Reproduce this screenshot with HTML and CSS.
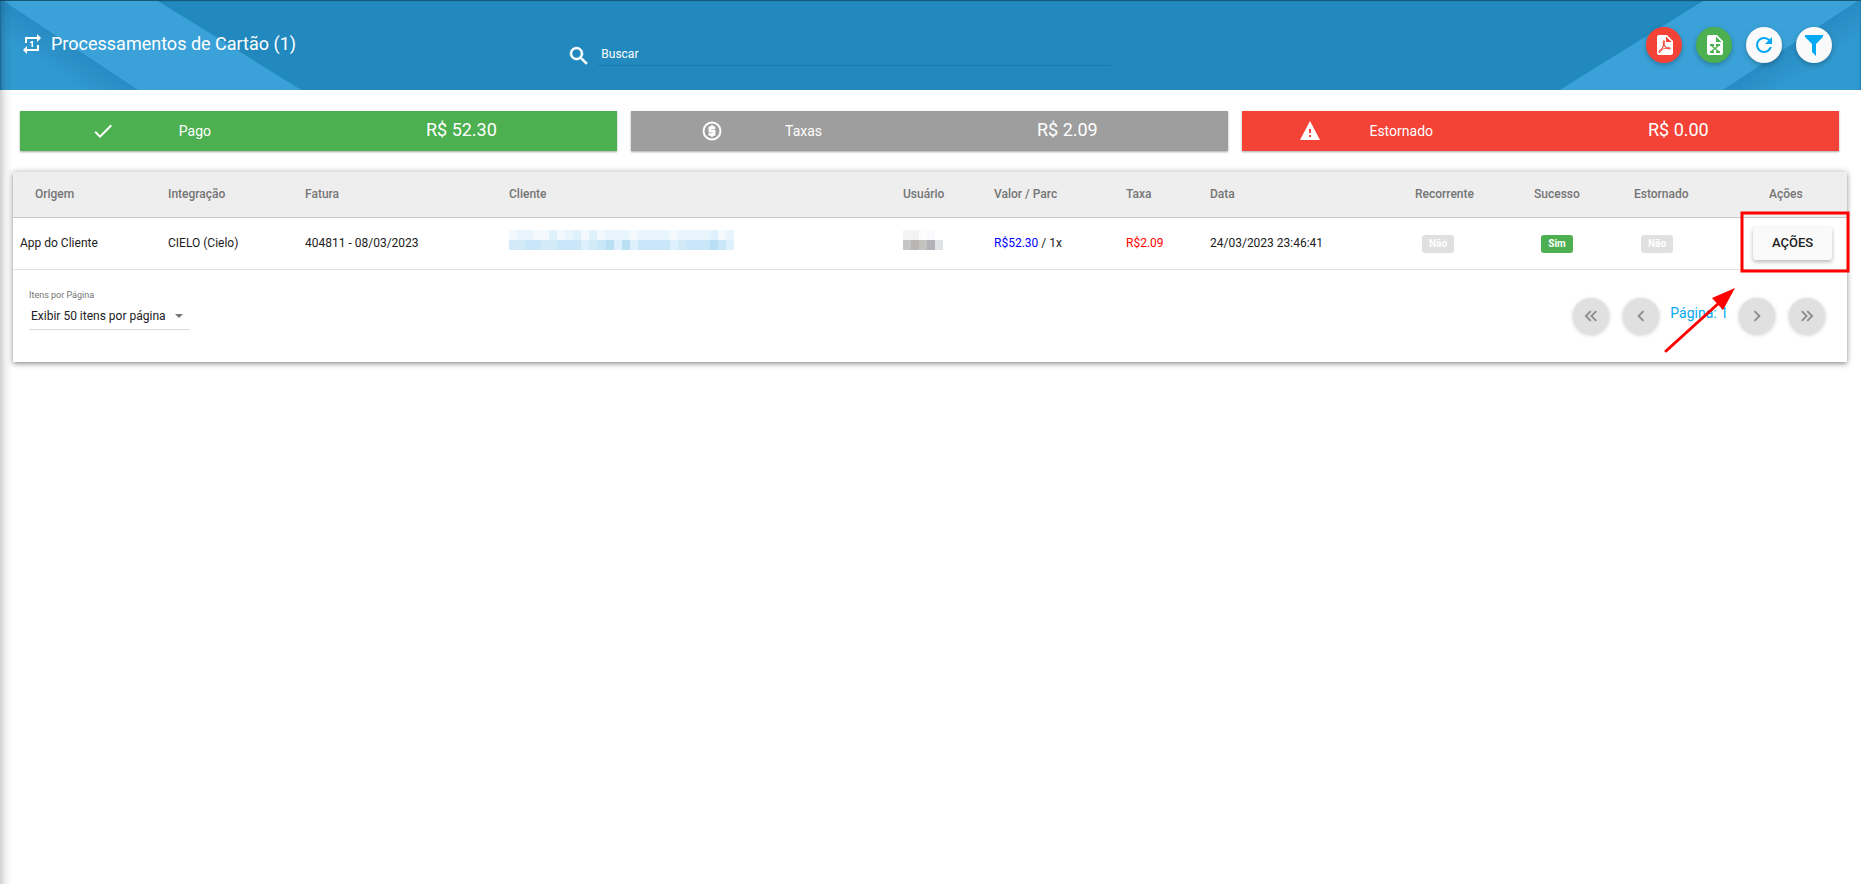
FILE: index.html
```html
<!DOCTYPE html>
<html lang="pt-BR">
<head>
<meta charset="utf-8">
<title>Processamentos de Cartão</title>
<link rel="stylesheet" href="styles.css">
</head>
<body>
<svg class="defs" width="0" height="0" aria-hidden="true">
  <defs>
    <linearGradient id="fold" gradientUnits="userSpaceOnUse" x1="69" y1="45" x2="52" y2="71">
      <stop offset="0" stop-color="#278cc3"/><stop offset="1" stop-color="#3099cf"/>
    </linearGradient>
    <symbol id="ribbon" viewBox="0 0 304 90">
      <polygon points="0,0 158,0 303,90 0,90" fill="#3aa2d8"/>
      <polygon points="0,0 2,0 138,90 0,90" fill="url(#fold)"/>
    </symbol>
  </defs>
</svg>

<header class="toolbar">
  <svg class="ribbon" width="304" height="90" aria-hidden="true"><use href="#ribbon"/></svg>
  <svg class="ribbon ribbon-right" width="304" height="90" aria-hidden="true"><use href="#ribbon"/></svg>
  <h1 class="title">
    <svg class="icon" viewBox="0 0 24 24"><path d="M13,15V9H12L10,10V11H11.5V15M17,17H7V14L3,18L7,22V19H19V13H17M7,7H17V10L21,6L17,2V5H5V11H7V7Z"/></svg>
    Processamentos de Cartão (1)
  </h1>
  <div class="search">
    <svg class="icon" viewBox="0 0 24 24"><path d="M9.5,3A6.5,6.5 0 0,1 16,9.5C16,11.11 15.41,12.59 14.44,13.73L14.71,14H15.5L20.5,19L19,20.5L14,15.5V14.71L13.73,14.44C12.59,15.41 11.11,16 9.5,16A6.5,6.5 0 0,1 3,9.5A6.5,6.5 0 0,1 9.5,3M9.5,5C7,5 5,7 5,9.5C5,12 7,14 9.5,14C12,14 14,12 14,9.5C14,7 12,5 9.5,5Z" stroke="currentColor" stroke-width="0.5"/></svg>
    <input class="search-input" type="text" placeholder="Buscar" aria-label="Buscar">
  </div>
  <div class="tools">
    <button class="fab fab-red" type="button" aria-label="Exportar PDF"><svg class="icon" viewBox="0 0 24 24"><path d="M14,9H19.5L14,3.5V9M7,2H15L21,8V20A2,2 0 0,1 19,22H7C5.89,22 5,21.1 5,20V4A2,2 0 0,1 7,2M11.93,12.44C12.34,13.34 12.86,14.08 13.46,14.59L13.87,14.91C13,15.07 11.8,15.35 10.53,15.84V15.84L10.42,15.88L10.92,14.84C11.37,13.97 11.7,13.18 11.93,12.44M18.41,16.25C18.59,16.07 18.68,15.84 18.69,15.59C18.72,15.39 18.67,15.2 18.57,15.04C18.28,14.57 17.53,14.35 16.29,14.35L15,14.42L14.13,13.84C13.5,13.32 12.93,12.41 12.53,11.28L12.57,11.14C12.9,9.81 13.21,8.2 12.55,7.54C12.39,7.38 12.17,7.3 11.94,7.3H11.7C11.33,7.3 11,7.69 10.91,8.07C10.54,9.4 10.76,10.13 11.13,11.34V11.35C10.88,12.23 10.56,13.25 10.05,14.28L9.09,16.08L8.2,16.57C7,17.32 6.43,18.16 6.32,18.69C6.28,18.88 6.3,19.05 6.37,19.23L6.4,19.28L6.88,19.59L7.32,19.7C8.13,19.7 9.05,18.75 10.29,16.63L10.47,16.56C11.5,16.23 12.78,16 14.5,15.81C15.53,16.32 16.74,16.55 17.5,16.55C17.94,16.55 18.24,16.44 18.41,16.25M18,15.54L18.09,15.65C18.08,15.75 18.05,15.76 18,15.78H17.96L17.77,15.8C17.31,15.8 16.6,15.61 15.87,15.29C15.96,15.19 16,15.19 16.1,15.19C17.5,15.19 17.9,15.44 18,15.54M8.83,17C8.18,18.19 7.59,18.85 7.14,19C7.19,18.62 7.64,17.96 8.35,17.31L8.83,17M11.85,10.09C11.62,9.19 11.61,8.46 11.78,8.04L11.85,7.92L12,7.97C12.17,8.21 12.19,8.53 12.09,9.07L12.06,9.23L11.9,10.05L11.85,10.09Z"/></svg></button>
    <button class="fab fab-green" type="button" aria-label="Exportar Excel"><svg class="icon" viewBox="0 0 24 24"><path d="M14,9H19.5L14,3.5V9M7,2H15L21,8V20A2,2 0 0,1 19,22H7C5.89,22 5,21.1 5,20V4C5,2.89 5.89,2 7,2M18,11H14V13H15L13,14.67L11,13H12V11H8V13H9L12,15.5L9,18H8V20H12V18H11L13,16.33L15,18H14V20H18V18H17L14,15.5L17,13H18V11Z"/></svg></button>
    <button class="fab fab-white" type="button" aria-label="Atualizar"><svg class="icon" viewBox="0 0 24 24"><path d="M17.65,6.35C16.2,4.9 14.21,4 12,4A8,8 0 0,0 4,12A8,8 0 0,0 12,20C15.73,20 18.84,17.45 19.73,14H17.65C16.83,16.33 14.61,18 12,18A6,6 0 0,1 6,12A6,6 0 0,1 12,6C13.66,6 15.14,6.69 16.22,7.78L13,11H20V4L17.65,6.35Z"/></svg></button>
    <button class="fab fab-white" type="button" aria-label="Filtrar"><svg class="icon" viewBox="0 0 24 24"><path d="M3,2H21V4H20.92L14,10.92V22.91L10,18.91V10.91L3.09,4H3V2Z"/></svg></button>
  </div>
</header>

<main class="content">
  <section class="summary">
    <div class="stat stat-green">
      <div class="stat-name">
        <span class="stat-icon"><svg class="icon" viewBox="0 0 24 24"><path d="M21,7L9,19L3.5,13.5L4.91,12.09L9,16.17L19.59,5.59L21,7Z"/></svg></span>
        <span>Pago</span>
      </div>
      <strong class="stat-value">R$ 52.30</strong>
    </div>
    <div class="stat stat-gray">
      <div class="stat-name">
        <span class="stat-icon"><svg class="icon" viewBox="0 0 24 24"><circle cx="12" cy="12" r="8.5" fill="none" stroke="currentColor" stroke-width="2"/><path d="M11,17.5H13V16.5H14A1,1 0 0,0 15.2,15.3V12.2A1,1 0 0,0 14,11H11V10H15V7.7H13V6.5H11V7.7H10A1,1 0 0,0 8.8,8.9V12A1,1 0 0,0 10,13.2H13V14.2H8.8V16.5H11V17.5Z" stroke="currentColor" stroke-width="0.5"/></svg></span>
        <span>Taxas</span>
      </div>
      <strong class="stat-value">R$ 2.09</strong>
    </div>
    <div class="stat stat-red">
      <div class="stat-name">
        <span class="stat-icon"><svg class="icon" viewBox="0 0 24 24"><path d="M13,14H11V10H13M13,18H11V16H13M2,21H22L12,2L2,21Z"/></svg></span>
        <span>Estornado</span>
      </div>
      <strong class="stat-value">R$ 0.00</strong>
    </div>
  </section>

  <section class="card">
    <table class="grid">
      <colgroup>
        <col class="c-origem"><col class="c-integracao"><col class="c-fatura"><col><col class="c-usuario"><col class="c-valor"><col class="c-taxa"><col class="c-data"><col class="c-recorrente"><col class="c-sucesso"><col class="c-estornado"><col class="c-acoes">
      </colgroup>
      <thead>
        <tr><th class="first">Origem</th><th>Integração</th><th>Fatura</th><th>Cliente</th><th>Usuário</th><th>Valor / Parc</th><th>Taxa</th><th>Data</th><th>Recorrente</th><th>Sucesso</th><th>Estornado</th><th class="acoes">Ações</th></tr>
      </thead>
      <tbody>
        <tr>
          <td class="first">App do Cliente</td>
          <td>CIELO (Cielo)</td>
          <td>404811 - 08/03/2023</td>
          <td>
            <svg class="mosaic" width="225" height="20" shape-rendering="crispEdges" aria-label="Cliente oculto">
              <rect width="225" height="10" fill="#e8f5fd"/>
              <g fill="#f3f9fd"><rect width="8" height="10"/><rect x="24" width="16" height="10"/><rect x="48" width="8" height="10"/><rect x="72" width="8" height="10"/><rect x="88" width="8" height="10"/><rect x="121" width="8" height="10"/><rect x="161" width="8" height="10"/><rect x="209" width="8" height="10"/></g>
              <g fill="#def1fc"><rect x="40" width="8" height="10"/><rect x="64" width="8" height="10"/><rect x="80" width="8" height="10"/><rect x="201" width="8" height="10"/></g>
              <rect y="10" width="225" height="10" fill="#c9e7f8"/>
              <g fill="#d3eaf8"><rect y="10" width="16" height="10"/><rect x="32" y="10" width="16" height="10"/><rect x="80" y="10" width="8" height="10"/><rect x="169" y="10" width="8" height="10"/></g>
              <g fill="#ddf0fb"><rect x="72" y="10" width="8" height="10"/><rect x="105" y="10" width="8" height="10"/><rect x="121" y="10" width="8" height="10"/><rect x="161" y="10" width="8" height="10"/><rect x="217" y="10" width="8" height="10"/></g>
              <g fill="#bae0f6"><rect x="97" y="10" width="8" height="10"/><rect x="113" y="10" width="8" height="10"/><rect x="201" y="10" width="8" height="10"/></g>
            </svg>
          </td>
          <td>
            <svg class="mosaic" width="40" height="20" shape-rendering="crispEdges" aria-label="Usuário oculto">
              <rect width="16" height="10" fill="#f4f3f3"/><rect x="16" width="8" height="10" fill="#fdfdfb"/><rect x="24" width="8" height="10" fill="#fafafd"/>
              <rect y="10" width="8" height="10" fill="#c6c6c6"/><rect x="8" y="10" width="8" height="10" fill="#bab5b3"/><rect x="16" y="10" width="8" height="10" fill="#c3c4bf"/><rect x="24" y="10" width="8" height="10" fill="#b3b2b9"/><rect x="32" y="10" width="8" height="10" fill="#dfe3e4"/>
            </svg>
          </td>
          <td><span class="amount">R$52.30</span> / 1x</td>
          <td class="fee">R$2.09</td>
          <td>24/03/2023 23:46:41</td>
          <td><span class="badge">Não</span></td>
          <td><span class="badge badge-yes">Sim</span></td>
          <td><span class="badge">Não</span></td>
          <td>
            <div class="actions-wrap">
              <button class="action-button" type="button">AÇÕES</button>
              <svg class="marker" width="186" height="144" viewBox="0 0 186 144" aria-hidden="true">
                <rect x="78" y="2" width="106" height="58" fill="none" stroke="#f00" stroke-width="3"/>
                <line x1="2" y1="140" x2="56" y2="91" stroke="#f00" stroke-width="3" stroke-linecap="round"/>
                <polygon points="71,77 48,87 59,99" fill="#f00"/>
              </svg>
            </div>
          </td>
        </tr>
      </tbody>
    </table>

    <footer class="pager">
      <div class="page-size">
        <label class="page-size-label" for="page-size">Itens por Página</label>
        <div class="select-box">
          <select class="page-size-select" id="page-size"><option>Exibir 50 itens por página</option></select>
          <span class="caret"></span>
        </div>
      </div>
      <nav class="pages" aria-label="Paginação">
        <button class="fab fab-off" type="button" disabled aria-label="Primeira"><svg class="chevron" viewBox="0 0 24 24"><path d="M18.41,7.41L17,6L11,12L17,18L18.41,16.59L13.83,12L18.41,7.41M12.41,7.41L11,6L5,12L11,18L12.41,16.59L7.83,12L12.41,7.41Z"/></svg></button>
        <button class="fab fab-off" type="button" disabled aria-label="Anterior"><svg class="chevron" viewBox="0 0 24 24"><path d="M15.41,16.58L10.83,12L15.41,7.41L14,6L8,12L14,18L15.41,16.58Z"/></svg></button>
        <span class="page-now">Página: 1</span>
        <button class="fab fab-off" type="button" disabled aria-label="Próxima"><svg class="chevron" viewBox="0 0 24 24"><path d="M8.59,16.58L13.17,12L8.59,7.41L10,6L16,12L10,18L8.59,16.58Z"/></svg></button>
        <button class="fab fab-off" type="button" disabled aria-label="Última"><svg class="chevron" viewBox="0 0 24 24"><path d="M5.59,7.41L7,6L13,12L7,18L5.59,16.59L10.17,12L5.59,7.41M11.59,7.41L13,6L19,12L13,18L11.59,16.59L16.17,12L11.59,7.41Z"/></svg></button>
      </nav>
    </footer>
  </section>
</main>
<div class="edge-shadow"></div>
</body>
</html>
```

FILE: styles.css
```css
* {
  box-sizing: border-box;
}

body {
  margin: 0;
  min-height: 100vh;
  background: #fff;
  color: #212121;
  font-family: Roboto, "Liberation Sans", sans-serif;
  font-size: 12px;
  line-height: 16px;
}

button,
input,
select {
  font: inherit;
}

svg {
  display: block;
  flex: none;
}

path {
  fill: currentColor;
}

.defs {
  position: absolute;
}

.icon {
  width: 24px;
  height: 24px;
}

.edge-shadow {
  position: fixed;
  top: 0;
  bottom: 0;
  left: 0;
  width: 12px;
  background: linear-gradient(to right, rgba(0, 0, 0, 0.18), rgba(0, 0, 0, 0.06) 45%, transparent);
  pointer-events: none;
}

/* Toolbar */
.toolbar {
  position: relative;
  display: grid;
  grid-template-columns: 300fr 297fr 403fr;
  height: 90px;
  color: #fff;
  background: #2189be;
  box-shadow: inset 0 1px 1px rgba(0, 0, 0, 0.4);
}

.ribbon {
  position: absolute;
  top: 1px;
  left: 0;
  height: 89px;
}

.ribbon-right {
  left: auto;
  right: 0;
  transform: scaleX(-1);
}

.title {
  position: relative;
  display: flex;
  align-items: center;
  gap: 7px;
  height: 88px;
  margin: 0;
  padding-left: 20px;
  font-size: 18px;
  font-weight: 400;
  white-space: nowrap;
}

.search {
  display: flex;
  align-items: flex-end;
  align-self: start;
  gap: 7px;
  padding: 42px 0 0 9px;
}

.search-input {
  flex: 1;
  height: 24px;
  padding: 0 3px;
  border: 0;
  border-bottom: 1px solid #1b78b0;
  outline: 0;
  background: transparent;
  color: #fff;
}

.search .icon {
  margin: 2px 0 -2px;
}

.search-input::placeholder {
  color: #fff;
  opacity: 1;
}

.tools {
  position: relative;
  display: flex;
  align-items: center;
  justify-content: flex-end;
  gap: 14px;
  padding-right: 29px;
}

.fab {
  display: flex;
  align-items: center;
  justify-content: center;
  width: 36px;
  height: 36px;
  padding: 0;
  border: 0;
  border-radius: 50%;
  box-shadow: 0 2px 5px rgba(0, 0, 0, 0.26);
}

.fab-red {
  background: #f44336;
  color: #fff;
}

.fab-green {
  background: #4caf50;
  color: #fff;
}

.fab-white {
  background: #fafafa;
  color: #03a9f4;
}

/* Summary cards */
.summary {
  display: grid;
  grid-template-columns: repeat(3, 1fr);
  gap: 14px;
  padding: 21px 22px 21px 20px;
}

.stat {
  display: grid;
  grid-template-columns: 32% 32%;
  justify-content: space-between;
  align-items: center;
  height: 40px;
  color: #fff;
  box-shadow: 0 1px 2px rgba(0, 0, 0, 0.35);
}

.stat-green {
  background: #4caf50;
}

.stat-gray {
  background: #9e9e9e;
}

.stat-red {
  background: #f44336;
}

.stat-name {
  display: flex;
  align-items: center;
  font-size: 14px;
}

.stat-icon {
  display: flex;
  flex: 1;
  justify-content: center;
  padding-left: 8px;
}

.stat-value {
  padding-bottom: 2px;
  font-size: 18px;
  font-weight: 400;
}

/* Table card */
.card {
  margin: 0 14px 0 13px;
  background: #fff;
  box-shadow: 0 2px 5px rgba(0, 0, 0, 0.4), 0 -2px 6px rgba(0, 0, 0, 0.1);
}

.grid {
  width: 100%;
  table-layout: fixed;
  border-collapse: collapse;
  text-align: left;
}

.c-origem { width: 155px; }
.c-integracao { width: 137px; }
.c-fatura { width: 204px; }
.c-usuario { width: 91px; }
.c-valor { width: 132px; }
.c-taxa { width: 84px; }
.c-data { width: 205px; }
.c-recorrente { width: 119px; }
.c-sucesso { width: 100px; }
.c-estornado { width: 119px; }
.c-acoes { width: 94px; }

.grid th,
.grid td {
  padding: 0;
  white-space: nowrap;
}

.grid th {
  height: 45px;
  border-bottom: 1px solid #c9c9c9;
  background: #eee;
  color: #757575;
  font-weight: 500;
}

.grid td {
  height: 52px;
  border-bottom: 1px solid #e0e0e0;
}

.grid th.first {
  padding-left: 22px;
}

.grid td.first {
  padding-left: 7px;
}

.grid th.acoes {
  padding-left: 16px;
}

.mosaic {
  margin-bottom: 6px;
}

.amount {
  color: #00f;
}

.grid td.fee {
  color: #f00;
}

.badge {
  display: block;
  width: 32px;
  height: 18px;
  margin: 2px 0 0 7px;
  border-radius: 3px;
  background: #e0e0e0;
  color: #fff;
  font-size: 10px;
  font-weight: 700;
  line-height: 18px;
  text-align: center;
}

.badge-yes {
  background: #4caf50;
}

.actions-wrap {
  position: relative;
  width: 79px;
}

.action-button {
  width: 79px;
  height: 33px;
  padding: 0;
  border: 0;
  border-radius: 3px;
  background: #fafafa;
  color: #212121;
  font-size: 13px;
  font-weight: 500;
  box-shadow: 0 2px 4px rgba(0, 0, 0, 0.28);
}

.marker {
  position: absolute;
  top: -16px;
  left: -89px;
  pointer-events: none;
}

/* Footer */
.pager {
  display: flex;
  justify-content: space-between;
  align-items: flex-start;
  height: 92px;
  padding: 17px 22px 0 16px;
}

.page-size {
  width: 161px;
}

.page-size-label {
  display: block;
  color: #757575;
  font-size: 9px;
}

.select-box {
  display: flex;
  align-items: center;
  border-bottom: 1px solid #dcdcdc;
}

.page-size-select {
  flex: 1;
  height: 26px;
  padding: 0 2px;
  border: 0;
  outline: 0;
  appearance: none;
  background: transparent;
  color: #212121;
}

.caret {
  margin-right: 7px;
  border: 4px solid transparent;
  border-top-color: #757575;
  border-bottom: 0;
}

.pages {
  display: flex;
  align-items: center;
  gap: 14px;
  padding-top: 11px;
}

.fab-off {
  background: #e0e0e0;
  color: #8b8b8b;
  box-shadow: 0 1px 4px rgba(0, 0, 0, 0.2);
}

.chevron {
  width: 22px;
  height: 22px;
}

.page-now {
  margin: 0 -3px;
  padding-bottom: 5px;
  color: #03a9f4;
  font-size: 14px;
}
```
